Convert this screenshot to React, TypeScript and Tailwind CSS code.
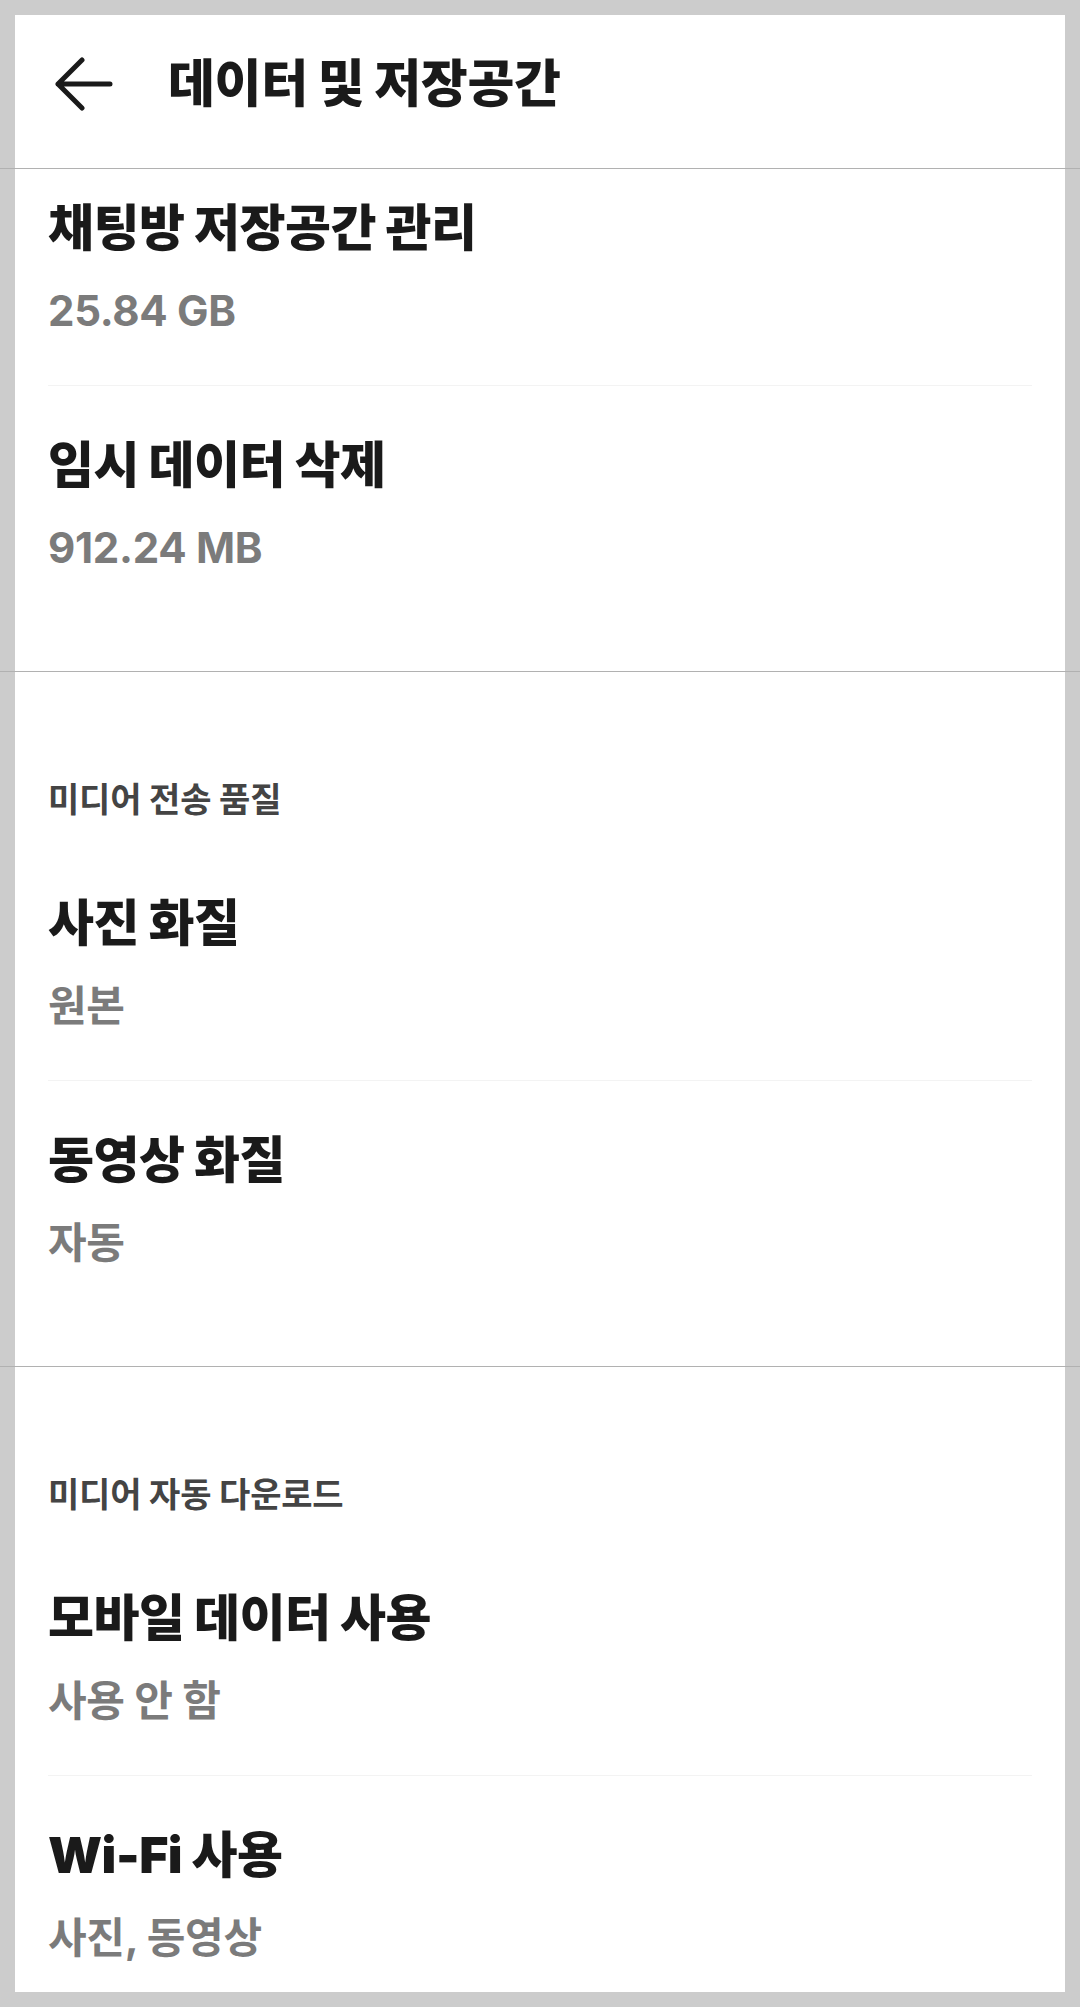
import React from 'react';

type Row = { title: string; value: string };

const storageRows: Row[] = [
  { title: '채팅방 저장공간 관리', value: '25.84 GB' },
  { title: '임시 데이터 삭제', value: '912.24 MB' },
];

const qualityRows: Row[] = [
  { title: '사진 화질', value: '원본' },
  { title: '동영상 화질', value: '자동' },
];

const downloadRows: Row[] = [
  { title: '모바일 데이터 사용', value: '사용 안 함' },
  { title: 'Wi-Fi 사용', value: '사진, 동영상' },
];

const font = "font-['Inter','Noto_Sans_CJK_KR',sans-serif]";

const SettingRow: React.FC<{ row: Row; first?: boolean; divider?: boolean }> = ({
  row,
  first,
  divider,
}) => (
  <div>
    <div className={`px-[33px] ${first ? 'h-[216px] pt-[31px]' : 'h-[236px] pt-[51px]'}`}>
      <div className="text-[50px] leading-[56px] font-black text-[#1a1a1a] tracking-[-0.5px]">
        {row.title}
      </div>
      <div className="mt-[31px] text-[42px] leading-[48px] font-bold text-[#7b7b7b] tracking-[-0.3px]">
        {row.value}
      </div>
    </div>
    {divider && <div className="mx-[33px] h-px bg-[#f3f3f3]" />}
  </div>
);

const SectionLabel: React.FC<{ label: string }> = ({ label }) => (
  <div className="px-[33px] pt-[108px] pb-[24px]">
    <div className="h-[40px] leading-[40px] text-[34px] font-bold text-[#444444] tracking-[-0.2px]">
      {label}
    </div>
  </div>
);

const Separator = () => <div className="h-px bg-black/[0.13] shrink-0" />;

export default function App() {
  return (
    <div className={`h-[2007px] bg-[#cccccc] py-[15px] flex flex-col ${font}`}>
      <div className="flex-1 flex flex-col overflow-hidden">
        {/* Header */}
        <div className="mx-[15px] h-[153px] shrink-0 bg-white flex items-start pt-[40px]">
          <button type="button" className="ml-[40px] w-[58px] h-[58px] flex items-center">
            <svg width="58" height="54" viewBox="0 0 58 54" fill="none">
              <path
                d="M27 3 L3 27 L27 51 M3 27 H55"
                stroke="#1a1a1a"
                strokeWidth="5"
                strokeLinecap="round"
                strokeLinejoin="round"
              />
            </svg>
          </button>
          <h1 className="ml-[55px] text-[51px] leading-[58px] font-black text-[#1a1a1a] tracking-[-0.3px]">
            데이터 및 저장공간
          </h1>
        </div>
        <Separator />

        {/* Storage */}
        <div className="mx-[15px] shrink-0 bg-white pb-[49px]">
          {storageRows.map((r, i) => (
            <SettingRow key={r.title} row={r} first={i === 0} divider={i < storageRows.length - 1} />
          ))}
        </div>
        <Separator />

        {/* Media quality */}
        <div className="mx-[15px] shrink-0 bg-white pb-[49px]">
          <SectionLabel label="미디어 전송 품질" />
          {qualityRows.map((r, i) => (
            <SettingRow key={r.title} row={r} divider={i < qualityRows.length - 1} />
          ))}
        </div>
        <Separator />

        {/* Auto download */}
        <div className="mx-[15px] flex-1 bg-white">
          <SectionLabel label="미디어 자동 다운로드" />
          {downloadRows.map((r, i) => (
            <SettingRow key={r.title} row={r} divider={i < downloadRows.length - 1} />
          ))}
        </div>
      </div>
    </div>
  );
}
